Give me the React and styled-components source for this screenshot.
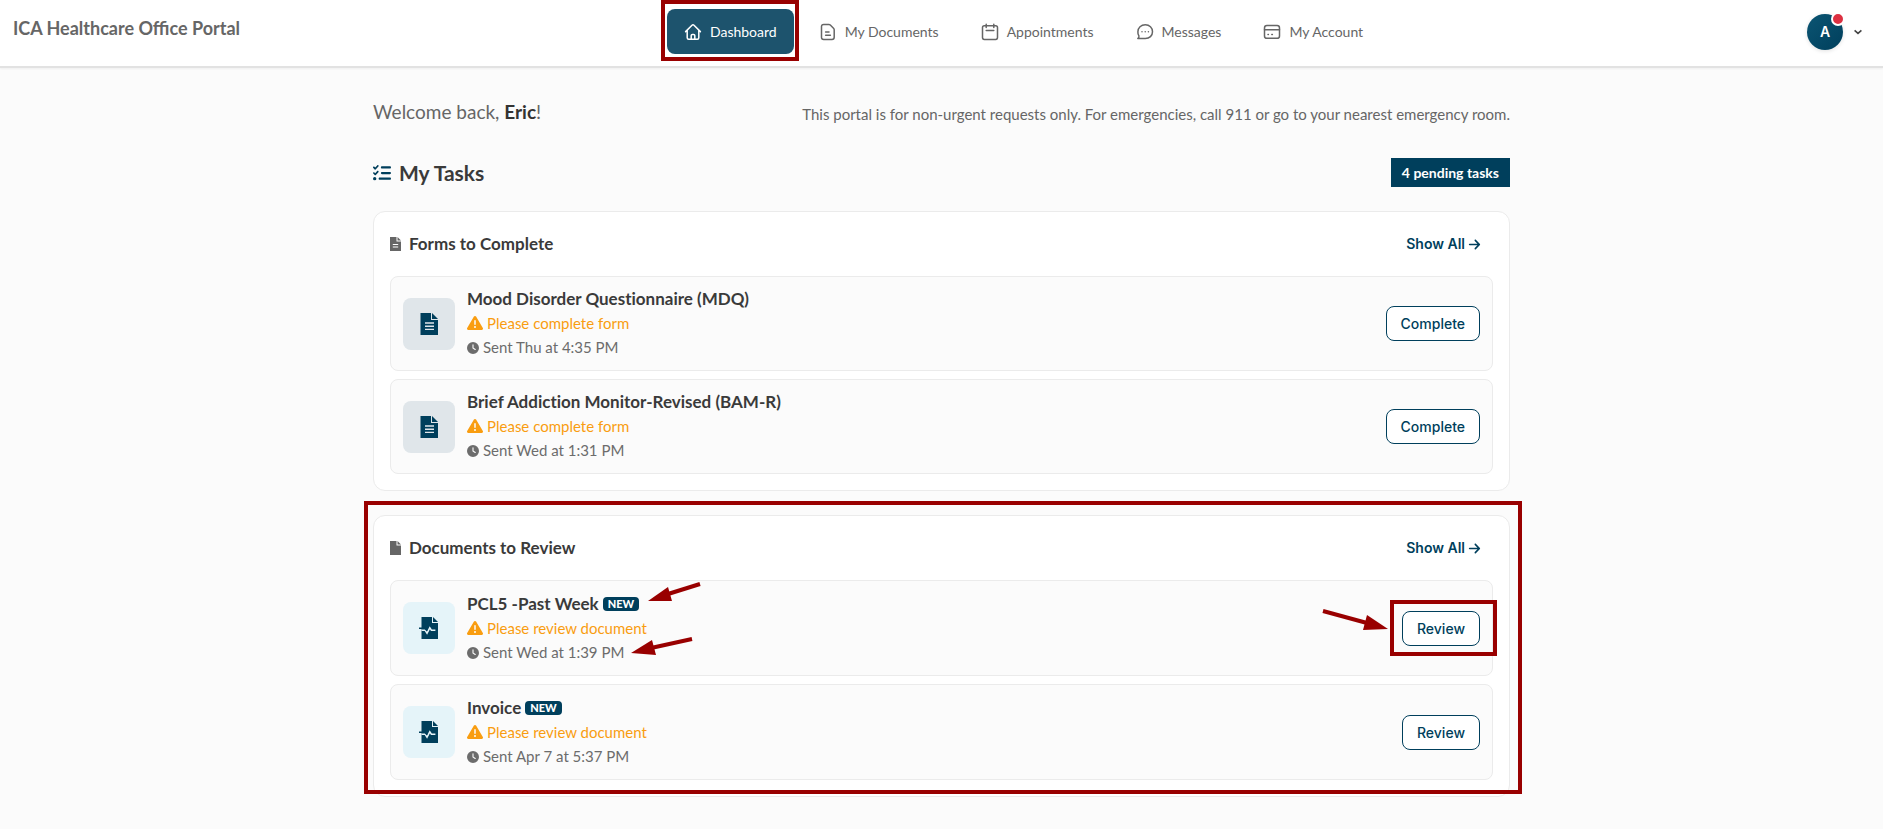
import React from "react";
import styled, { createGlobalStyle } from "styled-components";
import {
  FaArrowRight,
  FaClock,
  FaListCheck,
  FaTriangleExclamation,
} from "react-icons/fa6";

const navy = "#003f5c";
const markRed = "#990000";
const lato = 'Lato, "Open Sans", sans-serif';
const inter = 'Inter, Roboto, sans-serif';

const GlobalStyle = createGlobalStyle`
  *, *::before, *::after { box-sizing: border-box; }
  body {
    margin: 0;
    background: #fbfbfb;
    color: #666;
    font-family: ${lato};
    font-size: 15px;
    line-height: 24px;
  }
  h1, h2, h3, p, ul { margin: 0; padding: 0; }
  ul { list-style: none; }
  a { color: inherit; text-decoration: none; }
  svg { display: block; flex: none; }
`;

const Header = styled.header`
  display: flex;
  align-items: center;
  justify-content: space-between;
  height: 68px;
  padding: 0 20px 3px 13px;
  background: #fff;
  border-bottom: 2px solid #e2e2e2;
  box-shadow: 0 1px 2px rgba(0, 0, 0, 0.05);
`;

const Brand = styled.a`
  padding-bottom: 8px;
  font-size: 18px;
  font-weight: 700;
`;

const NavList = styled.ul`
  display: flex;
  gap: 8px;
`;

const NavItem = styled.li`
  position: relative;
`;

const NavLink = styled.a`
  display: flex;
  align-items: center;
  gap: 8px;
  height: 45px;
  padding: 0 17px;
  border-radius: 8px;
  background: ${(p) => (p.$active ? "#1d536d" : "transparent")};
  color: ${(p) => (p.$active ? "#fff" : "#666")};
  font-size: 14px;
`;

const AccountButton = styled.button`
  display: flex;
  align-items: center;
  gap: 10px;
  padding: 0;
  border: 0;
  background: none;
  color: #444;
  cursor: pointer;
`;

const Avatar = styled.span`
  position: relative;
  display: grid;
  place-items: center;
  width: 36px;
  height: 36px;
  border-radius: 50%;
  background: linear-gradient(135deg, #0b5573, #003f5c);
  box-shadow: 0 1px 4px rgba(0, 0, 0, 0.12);
  color: #fff;
  font: 600 14px/20px ${inter};
`;

const AlertDot = styled.span`
  position: absolute;
  top: -2px;
  right: -2px;
  width: 14px;
  height: 14px;
  border: 2px solid #fff;
  border-radius: 50%;
  background: #dc3041;
`;

const Main = styled.main`
  max-width: 1137px;
  margin: 0 auto;
  padding: 30px 0;
  font-variant-ligatures: none;
`;

const Row = styled.div`
  display: flex;
  align-items: center;
  justify-content: space-between;
`;

const Welcome = styled.h1`
  font-size: 19px;
  font-weight: 400;
  strong { color: #333; font-weight: 700; }
`;

const Notice = styled.p`
  padding-top: 4px;
`;

const TasksRow = styled(Row)`
  height: 29px;
  margin: 32px 0 24px;
`;

const TasksTitle = styled.h2`
  display: flex;
  align-items: center;
  gap: 8px;
  color: #3a3a3a;
  font-size: 21px;
  font-weight: 700;
  svg { color: ${navy}; }
`;

const PendingBadge = styled.span`
  padding: 0 11px;
  background: ${navy};
  color: #fff;
  font-size: 14px;
  font-weight: 700;
  line-height: 29px;
`;

const Card = styled.section`
  position: relative;
  margin-bottom: 24px;
  padding: 16px;
  border: 1px solid #ebebeb;
  border-radius: 12px;
  background: #fff;
`;

const CardHeader = styled(Row)`
  height: 32px;
  margin-bottom: 16px;
  padding-right: 12px;
`;

const CardTitle = styled.h3`
  display: flex;
  align-items: center;
  gap: 8px;
  color: #3a3a3a;
  font-size: 17px;
  font-weight: 700;
  svg { color: #666; }
`;

const ShowAll = styled.a`
  display: flex;
  align-items: center;
  gap: 3px;
  color: ${navy};
  font: 600 14px/20px ${inter};
`;

const TaskList = styled.ul`
  display: grid;
  gap: 8px;
`;

const TaskItem = styled.li`
  position: relative;
  display: flex;
  align-items: center;
  gap: 12px;
  padding: 10px 12px;
  border: 1px solid #ebebeb;
  border-radius: 8px;
  background: #fbfbfb;
`;

const TaskIcon = styled.span`
  display: grid;
  place-items: center;
  width: 52px;
  height: 52px;
  border-radius: 8px;
  background: ${(p) => (p.$review ? "#e5f4f9" : "#e0e6ea")};
  color: ${navy};
`;

const TaskText = styled.div`
  flex: 1;
`;

const TaskName = styled.p`
  display: flex;
  align-items: center;
  gap: 4px;
  color: #3a3a3a;
  font-size: 17px;
  font-weight: 700;
  line-height: ${(p) => (p.$review ? 25 : 24)}px;
`;

const NewBadge = styled.span`
  padding: 0 5px;
  border-radius: 4px;
  background: ${navy};
  color: #fff;
  font-size: 11px;
  font-weight: 900;
  line-height: 14px;
`;

const TaskMeta = styled.p`
  display: flex;
  align-items: center;
  gap: 4px;
  color: ${(p) => (p.$warning ? "#f99d10" : "#6c6c6c")};
  line-height: ${(p) => (p.$warning ? 24 : 25)}px;
`;

const ActionButton = styled.button`
  padding: 0 14px;
  border: 1px solid ${navy};
  border-radius: 8px;
  background: #fff;
  color: ${navy};
  font: 500 14px/33px ${inter};
  cursor: pointer;
`;

const ActionWrap = styled.div`
  position: relative;
`;

/* Red instruction marks that lie over the page */
const Frame = styled.span`
  position: absolute;
  inset: ${(p) => p.$inset};
  border: 4px solid ${markRed};
  pointer-events: none;
`;

const Arrow = styled.svg`
  position: absolute;
  top: ${(p) => p.$top}px;
  left: ${(p) => p.$left}px;
  overflow: visible;
  pointer-events: none;
`;

function NavIcon({ children }) {
  return (
    <svg width="18" height="18" viewBox="0 0 18 18" fill="none" stroke="currentColor"
      strokeWidth="1.5" strokeLinecap="round" strokeLinejoin="round" aria-hidden="true">
      {children}
    </svg>
  );
}

const HomeIcon = () => (
  <NavIcon>
    <path d="M1.6 8.6 8 2.2q1-1 2 0l6.4 6.4M3.2 7.4v7.4q0 1.5 1.5 1.5h8.6q1.5 0 1.5-1.5V7.4" />
    <path d="M7.2 16v-3.400q0-1.200 1.200-1.200h1.200q1.200 0 1.200 1.200V16" />
  </NavIcon>
);

const DocumentIcon = () => (
  <NavIcon>
    <path d="M4.700 1.400h5.100q.9 0 1.500.6l3.200 3.200q.7.7.7 1.600v7.400q0 2.200-2.200 2.200H4.700q-2.200 0-2.200-2.200V3.600q0-2.200 2.200-2.200Z" />
    <path d="M6.600 9h3.400M6.600 12.200h4.800" />
  </NavIcon>
);

const CalendarIcon = () => (
  <NavIcon>
    <rect x="1.500" y="2.800" width="15" height="13.600" rx="1.800" />
    <path d="M5.200 1.200v3.400M12.800 1.200v3.400M5.200 7.600h7.600" />
  </NavIcon>
);

const ChatIcon = () => (
  <NavIcon>
    <path d="M9.300 1.800c4.200 0 7.200 2.900 7.200 6.900s-3 6.900-7.200 6.900H1.800c1.100-.9 1.400-1.800 1.100-2.800A6.600 6.600 0 0 1 1.900 8.700C1.900 4.700 5.100 1.800 9.300 1.800Z" />
    <path d="M6 8.800h.01M9.200 8.800h.01M12.400 8.800h.01" />
  </NavIcon>
);

const CardIcon = () => (
  <NavIcon>
    <rect x="1.500" y="2.500" width="15" height="12.800" rx="2.400" />
    <path d="M1.500 6.700h15M5 11.400h.4M8.800 11.400h.6" />
  </NavIcon>
);

const SmallFileIcon = ({ lines }) => (
  <svg width="11" height="14" viewBox="0 0 11 14" fill="currentColor" aria-hidden="true">
    <path d="M0 0h6.500v4.500H11V14H0Z" />
    <path d="M7.500 0 11 3.500H7.500Z" />
    {lines && <path d="M2.800 7.500h5.400M2.800 10h5.400" stroke="#fff" />}
  </svg>
);

const FormFileIcon = () => (
  <svg width="18" height="22" viewBox="0 0 18 22" fill="currentColor" aria-hidden="true">
    <path d="M.5 0H11v7h7v15H.5Z" />
    <path d="M12 0 18 6h-6Z" />
    <path d="M5 10h9M5 13.200h9M5 16.400h9" stroke="#e0e6ea" strokeWidth="1.400" />
  </svg>
);

const WaveFileIcon = () => (
  <svg width="20" height="22" viewBox="0 0 20 22" fill="currentColor" aria-hidden="true">
    <path d="M2.500 0H13v6h6v16H2.500Z" />
    <path d="M14 0 19 5h-5Z" />
    <path d="M2.500 13.200H6l2 3 2.800-5.400 1.600 2.400h4" fill="none" stroke="#e5f4f9" strokeWidth="1.500" />
    <path d="M0 11.200h6.200l1.800 2.600" fill="none" stroke="currentColor" strokeWidth="1.500" />
  </svg>
);

const navItems = [
  { label: "Dashboard", Icon: HomeIcon, active: true },
  { label: "My Documents", Icon: DocumentIcon },
  { label: "Appointments", Icon: CalendarIcon },
  { label: "Messages", Icon: ChatIcon },
  { label: "My Account", Icon: CardIcon },
];

const forms = [
  { name: "Mood Disorder Questionnaire (MDQ)", sent: "Sent Thu at 4:35 PM" },
  { name: "Brief Addiction Monitor-Revised (BAM-R)", sent: "Sent Wed at 1:31 PM" },
];

const documents = [
  { name: "PCL5 -Past Week", sent: "Sent Wed at 1:39 PM", marked: true },
  { name: "Invoice", sent: "Sent Apr 7 at 5:37 PM" },
];

function Task({ task, review }) {
  return (
    <TaskItem>
      <TaskIcon $review={review}>
        {review ? <WaveFileIcon /> : <FormFileIcon />}
      </TaskIcon>
      <TaskText>
        <TaskName $review={review}>
          {task.name}
          {review && <NewBadge>NEW</NewBadge>}
        </TaskName>
        <TaskMeta $warning>
          <FaTriangleExclamation size={16} />
          {review ? "Please review document" : "Please complete form"}
        </TaskMeta>
        <TaskMeta>
          <FaClock size={12} />
          {task.sent}
        </TaskMeta>
      </TaskText>
      <ActionWrap>
        <ActionButton type="button">{review ? "Review" : "Complete"}</ActionButton>
        {task.marked && <Frame $inset="-11px -17px -10px -12px" />}
      </ActionWrap>
      {task.marked && (
        <>
          <Arrow $top={0} $left={257} width="54" height="22" aria-hidden="true">
            <path d="M52 3 20 13" stroke={markRed} strokeWidth="4" />
            <path d="M0 20 20 6l4 14Z" fill={markRed} />
          </Arrow>
          <Arrow $top={55} $left={240} width="62" height="20" aria-hidden="true">
            <path d="M61 3 20 12" stroke={markRed} strokeWidth="4" />
            <path d="M0 17 21 4l4 15Z" fill={markRed} />
          </Arrow>
          <Arrow $top={26} $left={932} width="66" height="26" aria-hidden="true">
            <path d="M0 4 44 16" stroke={markRed} strokeWidth="4" />
            <path d="M65 22 44 8l-4 15Z" fill={markRed} />
          </Arrow>
        </>
      )}
    </TaskItem>
  );
}

function TaskCard({ title, icon, tasks, review }) {
  return (
    <Card>
      <CardHeader>
        <CardTitle>{icon}{title}</CardTitle>
        <ShowAll href="#all">Show All <FaArrowRight size={13} /></ShowAll>
      </CardHeader>
      <TaskList>
        {tasks.map((task) => <Task key={task.name} task={task} review={review} />)}
      </TaskList>
      {review && <Frame $inset="-15px -13px 2px -10px" />}
    </Card>
  );
}

export default function App() {
  return (
    <>
      <GlobalStyle />
      <Header>
        <Brand href="#home">ICA Healthcare Office Portal</Brand>
        <nav aria-label="Main">
          <NavList>
            {navItems.map(({ label, Icon, active }) => (
              <NavItem key={label}>
                <NavLink href="#nav" $active={active} aria-current={active ? "page" : undefined}>
                  <Icon />
                  {label}
                </NavLink>
                {active && <Frame $inset="-9px -5px -7px -6px" />}
              </NavItem>
            ))}
          </NavList>
        </nav>
        <AccountButton type="button" aria-label="Account menu">
          <Avatar>A<AlertDot /></Avatar>
          <svg width="10" height="10" viewBox="0 0 10 10" fill="none" stroke="currentColor" strokeWidth="1.600" aria-hidden="true">
            <path d="m1.600 3.400 3.400 3 3.400-3" />
          </svg>
        </AccountButton>
      </Header>
      <Main>
        <Row>
          <Welcome>Welcome back, <strong>Eric</strong>!</Welcome>
          <Notice>This portal is for non-urgent requests only. For emergencies, call 911 or go to your nearest emergency room.</Notice>
        </Row>
        <TasksRow>
          <TasksTitle><FaListCheck size={18} />My Tasks</TasksTitle>
          <PendingBadge>4 pending tasks</PendingBadge>
        </TasksRow>
        <TaskCard title="Forms to Complete" icon={<SmallFileIcon lines />} tasks={forms} />
        <TaskCard title="Documents to Review" icon={<SmallFileIcon />} tasks={documents} review />
      </Main>
    </>
  );
}
